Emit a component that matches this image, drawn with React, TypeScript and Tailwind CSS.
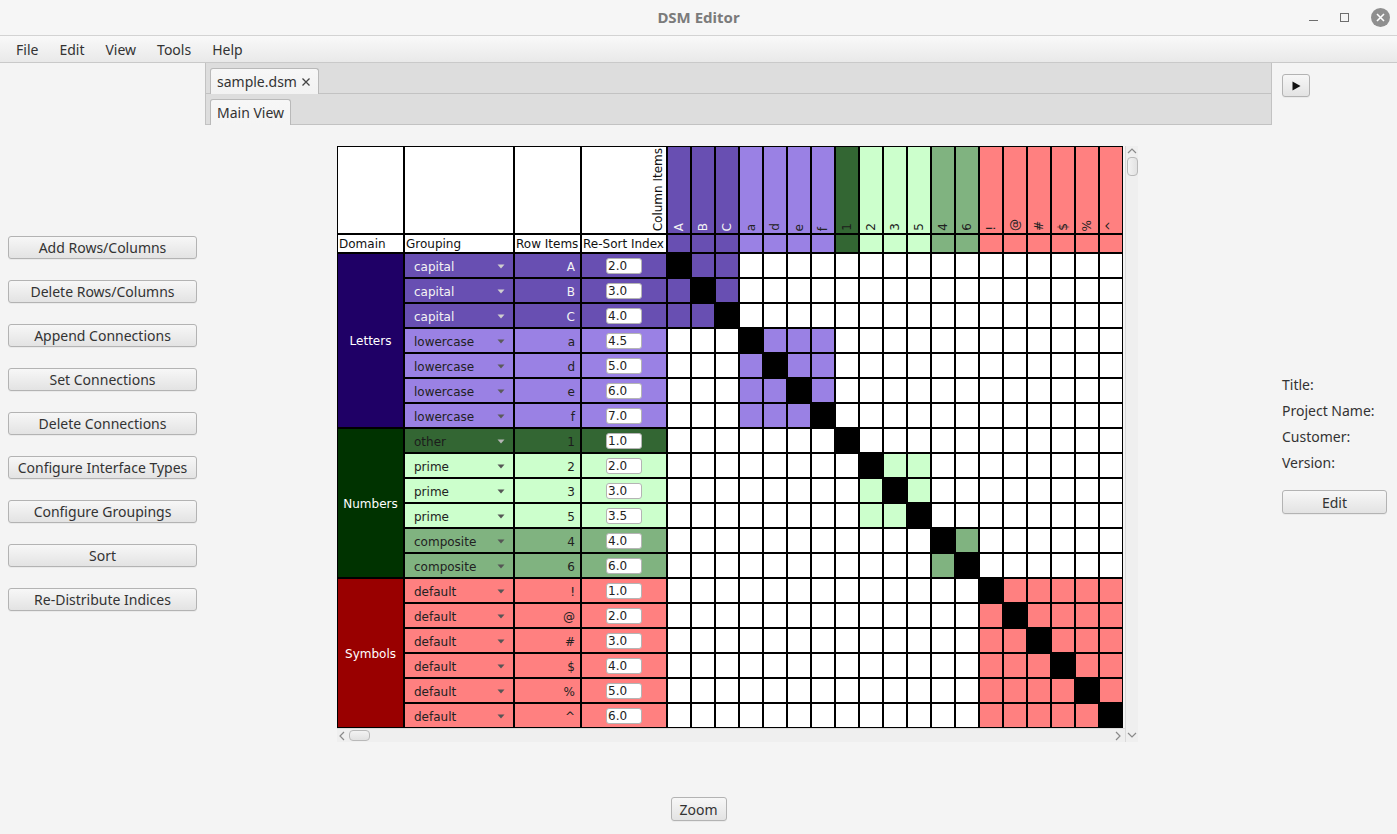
import React from "react";

type G = { bg: string; fg: string; arrow: string };

const groups: Record<string, G> = {
  capital: { bg: "bg-[#684fb2]", fg: "text-[#f4f4f4]", arrow: "#cfcfcf" },
  lowercase: { bg: "bg-[#9a81e4]", fg: "text-[#222222]", arrow: "#5a5a5a" },
  other: { bg: "bg-[#336633]", fg: "text-[#1c1c1c]", arrow: "#b5b5b5" },
  prime: { bg: "bg-[#ccffcc]", fg: "text-[#222222]", arrow: "#555555" },
  composite: { bg: "bg-[#80b380]", fg: "text-[#222222]", arrow: "#555555" },
  default: { bg: "bg-[#ff8080]", fg: "text-[#222222]", arrow: "#555555" },
};

const items: [string, string, string][] = [
  ["A", "capital", "2.0"],
  ["B", "capital", "3.0"],
  ["C", "capital", "4.0"],
  ["a", "lowercase", "4.5"],
  ["d", "lowercase", "5.0"],
  ["e", "lowercase", "6.0"],
  ["f", "lowercase", "7.0"],
  ["1", "other", "1.0"],
  ["2", "prime", "2.0"],
  ["3", "prime", "3.0"],
  ["5", "prime", "3.5"],
  ["4", "composite", "4.0"],
  ["6", "composite", "6.0"],
  ["!", "default", "1.0"],
  ["@", "default", "2.0"],
  ["#", "default", "3.0"],
  ["$", "default", "4.0"],
  ["%", "default", "5.0"],
  ["^", "default", "6.0"],
];

const domains: Record<number, { name: string; bg: string; span: string }> = {
  0: { name: "Letters", bg: "bg-[#1f0066]", span: "row-span-7" },
  7: { name: "Numbers", bg: "bg-[#003300]", span: "row-span-6" },
  13: { name: "Symbols", bg: "bg-[#990000]", span: "row-span-6" },
};

const btn =
  "flex items-center justify-center border border-[#b3b3b3] rounded-[3px] bg-linear-to-b from-[#f7f7f7] to-[#e3e3e3] text-[14px] text-[#333333] shadow-[0_1px_0_rgba(0,0,0,0.04)] whitespace-nowrap";

const leftButtons = [
  "Add Rows/Columns",
  "Delete Rows/Columns",
  "Append Connections",
  "Set Connections",
  "Delete Connections",
  "Configure Interface Types",
  "Configure Groupings",
  "Sort",
  "Re-Distribute Indices",
];

function Arrow({ color }: { color: string }) {
  return (
    <svg width="8" height="5" viewBox="0 0 8 5">
      <path d="M0.5 0.5 L7.5 0.5 L4 4.5 Z" fill={color} />
    </svg>
  );
}

function Chevron({ dir }: { dir: "up" | "down" | "left" | "right" }) {
  const d =
    dir === "up"
      ? "M1 6 L5 2 L9 6"
      : dir === "down"
      ? "M1 2 L5 6 L9 2"
      : dir === "left"
      ? "M6 1 L2 5 L6 9"
      : "M2 1 L6 5 L2 9";
  return (
    <svg width="10" height="10" viewBox="0 0 10 10">
      <path d={d} fill="none" stroke="#8a8a8a" strokeWidth="1.2" />
    </svg>
  );
}

function Grid() {
  const cells: React.ReactNode[] = [];
  const cell = "border border-black";
  cells.push(<div key="h1" className={`${cell} bg-white`} />);
  cells.push(<div key="h2" className={`${cell} bg-white`} />);
  cells.push(<div key="h3" className={`${cell} bg-white`} />);
  cells.push(
    <div key="h4" className={`${cell} bg-white flex items-end justify-end pb-[2px] pr-[1px]`}>
      <span className="[writing-mode:vertical-rl] rotate-180 leading-[14px] text-[#111]">Column Items</span>
    </div>
  );
  items.forEach(([n, g], j) => {
    const gr = groups[g];
    cells.push(
      <div key={`ch${j}`} className={`${cell} ${gr.bg} ${gr.fg} flex items-end justify-center pb-[2px]`}>
        <span className="[writing-mode:vertical-rl] rotate-180 leading-[14px]">{n}</span>
      </div>
    );
  });
  ["Domain", "Grouping", "Row Items", "Re-Sort Index"].forEach((t) =>
    cells.push(
      <div key={`l${t}`} className={`${cell} bg-white flex items-center pl-[1px] text-[#111] whitespace-nowrap overflow-hidden`}>
        {t}
      </div>
    )
  );
  items.forEach(([, g], j) => {
    cells.push(<div key={`cs${j}`} className={`${cell} ${groups[g].bg}`} />);
  });
  items.forEach(([n, g, idx], i) => {
    const gr = groups[g];
    const dom = domains[i];
    if (dom) {
      cells.push(
        <div key={`d${i}`} className={`${cell} ${dom.bg} ${dom.span} flex items-center justify-center text-white pt-[1px]`}>
          {dom.name}
        </div>
      );
    }
    cells.push(
      <div key={`g${i}`} className={`${cell} ${gr.bg} ${gr.fg} flex items-center justify-between pl-[9px] pr-[8px] pt-[2px]`}>
        <span>{g}</span>
        <Arrow color={gr.arrow} />
      </div>
    );
    cells.push(
      <div key={`r${i}`} className={`${cell} ${gr.bg} ${gr.fg} flex items-center justify-end pr-[5px] pt-[2px]`}>
        {n}
      </div>
    );
    cells.push(
      <div key={`s${i}`} className={`${cell} ${gr.bg} flex items-center justify-center pt-[1px]`}>
        <div className="w-[36px] h-[16px] bg-white border border-[#b4b4b4] rounded-[3px] text-[12px] leading-[14px] pl-[1px] text-[#222]">
          {idx}
        </div>
      </div>
    );
    items.forEach(([, g2], j) => {
      const bg = i === j ? "bg-black" : g2 === g ? gr.bg : "bg-white";
      cells.push(<div key={`m${i}-${j}`} className={`${cell} ${bg}`} />);
    });
  });
  return (
    <div className="grid grid-cols-[67px_110px_67px_86px_repeat(19,24px)] grid-rows-[88px_19px_repeat(19,25px)] text-[12px] font-['DejaVu_Sans',sans-serif]">
      {cells}
    </div>
  );
}

export default function App() {
  return (
    <div className="w-[1397px] h-[834px] bg-[#f4f4f4] flex flex-col font-['Noto_Sans',sans-serif] text-[14px] text-[#333] overflow-hidden">
      <div className="h-[36px] shrink-0 bg-[#f6f6f6] border-b border-[#d3d3d3] relative flex items-center justify-center">
        <span className="text-[15px] font-bold text-[#7b7b7b]">DSM Editor</span>
        <div className="absolute right-[7px] top-0 h-[35px] flex items-center gap-[22px]">
          <div className="w-[9px] h-[1px] bg-[#6e6e6e] mt-[6px]" />
          <div className="w-[9px] h-[9px] border border-[#6e6e6e]" />
          <div className="w-[19px] h-[19px] rounded-full bg-[#8f8f8f] flex items-center justify-center">
            <svg width="9" height="9" viewBox="0 0 9 9">
              <path d="M1 1 L8 8 M8 1 L1 8" stroke="white" strokeWidth="1.6" />
            </svg>
          </div>
        </div>
      </div>
      <div className="h-[27px] shrink-0 bg-linear-to-b from-[#f9f9f9] to-[#e9e9e9] border-b border-[#c9c9c9] flex items-center pl-[16px] pt-[1px] gap-[21px] text-[14px] text-[#333]">
        <span>File</span>
        <span>Edit</span>
        <span>View</span>
        <span>Tools</span>
        <span>Help</span>
      </div>
      <div className="flex-1 flex min-h-0">
        <div className="w-[205px] shrink-0 pt-[173px] px-[8px] flex flex-col gap-[21px]">
          {leftButtons.map((b) => (
            <div key={b} className={`${btn} h-[23px]`}>
              {b}
            </div>
          ))}
        </div>
        <div className="w-[1067px] shrink-0 flex flex-col">
          <div className="h-[31px] shrink-0 bg-[#dddddd] border-l border-r border-b border-[#c2c2c2] flex items-end pl-[4px]">
            <div className="h-[26px] -mb-px bg-linear-to-b from-[#f7f7f7] to-[#f2f2f2] border border-b-0 border-[#b9b9b9] rounded-t-[3px] flex items-center pl-[6px] pr-[7px] gap-[4px] text-[14px] text-[#333]">
              <span>sample.dsm</span>
              <svg width="10" height="10" viewBox="0 0 10 10">
                <path d="M1.5 1.5 L8.5 8.5 M8.5 1.5 L1.5 8.5" stroke="#444" strokeWidth="1.3" />
              </svg>
            </div>
          </div>
          <div className="h-[31px] shrink-0 bg-[#dddddd] border-l border-r border-b border-[#c2c2c2] flex items-end pl-[4px]">
            <div className="h-[26px] -mb-px bg-linear-to-b from-[#f7f7f7] to-[#f4f4f4] border border-b-0 border-[#b9b9b9] rounded-t-[3px] flex items-center px-[6px] text-[14px] text-[#333]">
              Main View
            </div>
          </div>
          <div className="pt-[21px] pl-[132px]">
            <div className="flex w-[801px] h-[596px]">
              <div className="flex flex-col w-[788px]">
                <div className="h-[582px] bg-[#f4f4f4]">
                  <Grid />
                </div>
                <div className="h-[14px] bg-[#efefef] border-t border-[#dadada] flex items-center justify-between px-[1px]">
                  <div className="flex items-center gap-[1px]">
                    <Chevron dir="left" />
                    <div className="w-[21px] h-[11px] rounded-[4px] border border-[#b9b9b9] bg-linear-to-b from-[#f3f3f3] to-[#e2e2e2]" />
                  </div>
                  <Chevron dir="right" />
                </div>
              </div>
              <div className="w-[13px] bg-[#efefef] border-l border-[#dadada] flex flex-col items-center justify-between py-[1px]">
                <div className="flex flex-col items-center">
                  <Chevron dir="up" />
                  <div className="w-[11px] h-[19px] rounded-[4px] border border-[#b9b9b9] bg-linear-to-r from-[#f3f3f3] to-[#e2e2e2]" />
                </div>
                <Chevron dir="down" />
              </div>
            </div>
          </div>
        </div>
        <div className="flex-1 pl-[10px] pt-[11px] flex flex-col items-start">
          <div className={`${btn} w-[28px] h-[23px]`}>
            <svg width="10" height="10" viewBox="0 0 10 10">
              <path d="M1.5 0.5 L9.5 5 L1.5 9.5 Z" fill="#111" />
            </svg>
          </div>
          <div className="mt-[274px] flex flex-col">
            <div className="h-[26px] flex items-center">Title:</div>
            <div className="h-[26px] flex items-center whitespace-nowrap">Project Name:</div>
            <div className="h-[26px] flex items-center">Customer:</div>
            <div className="h-[26px] flex items-center">Version:</div>
          </div>
          <div className={`${btn} w-[105px] h-[24px] mt-[15px]`}>Edit</div>
        </div>
      </div>
      <div className="shrink-0 flex justify-center pb-[13px]">
        <div className={`${btn} w-[56px] h-[24px]`}>Zoom</div>
      </div>
    </div>
  );
}
